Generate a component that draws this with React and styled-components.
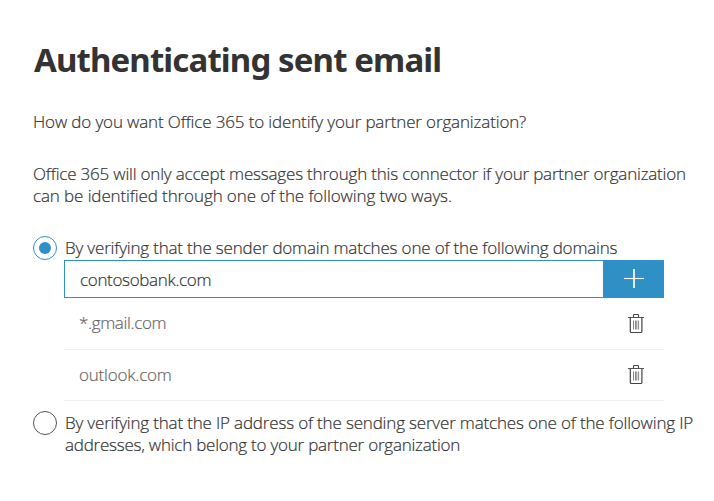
import React from "react";
import styled, { createGlobalStyle } from "styled-components";

const GlobalStyle = createGlobalStyle`
  * { box-sizing: border-box; }
  body { margin: 0; background: #fff; overflow: hidden; }
`;

const Page = styled.main`
  width: 714px;
  height: 501px;
  padding: 37px 0 0 33px;
  background: #fff;
  color: #333;
  font: 300 17px/22px "Open Sans", "Noto Sans", sans-serif;
  -webkit-text-stroke: 0.2px currentColor;
`;

const Title = styled.h1`
  margin: 0 0 28px 1px;
  color: #333;
  font: 700 33px/46px "Noto Sans", "Open Sans", sans-serif;
  letter-spacing: -0.88px;
  -webkit-text-stroke: 0;
  white-space: nowrap;
`;

const Paragraph = styled.p`
  margin: 0 0 ${(p) => p.$gap}px;
`;

const Line = styled.span`
  display: block;
  width: max-content;
  white-space: nowrap;
  letter-spacing: ${(p) => p.$spacing || 0}px;
`;

const Option = styled.label`
  display: flex;
  align-items: flex-start;
  gap: 8px;
`;

const Radio = styled.span`
  display: flex;
  flex: none;
  align-items: center;
  justify-content: center;
  width: 24px;
  height: 24px;
  border: 1px solid ${(p) => (p.$checked ? "#2f90c5" : "#555")};
  border-radius: 50%;

  &::after {
    content: "";
    width: 12px;
    height: 12px;
    border-radius: 50%;
    background: ${(p) => (p.$checked ? "#2f90c5" : "transparent")};
  }
`;

const OptionText = styled.span`
  display: block;
  padding-top: 1px;
`;

const Domains = styled.section`
  width: 600px;
  margin: 0 0 10px 31px;
`;

const Entry = styled.div`
  display: flex;
  height: 38px;
`;

const Field = styled.div`
  display: flex;
  align-items: center;
  width: 539px;
  padding: 2px 0 0 15px;
  border: 1px solid #2f90c5;
  border-right: 0;
`;

const AddButton = styled.button`
  display: flex;
  align-items: center;
  justify-content: center;
  width: 61px;
  padding: 0 0 0 1px;
  border: 0;
  background: #2f90c5;
`;

const DomainRow = styled.div`
  display: flex;
  align-items: center;
  justify-content: space-between;
  height: ${(p) => p.$height}px;
  padding: 0 20px 0 15px;
  border-bottom: 1px solid #f1f1f1;
  color: #666;
`;

const DomainName = styled(Line)`
  padding-bottom: ${(p) => p.$lift || 0}px;
`;

const PlusIcon = () => (
  <svg width="20" height="20" viewBox="0 0 20 20" fill="none" stroke="#fff">
    <path d="M0 9.5H20" strokeWidth="1.1" />
    <path d="M10 0V19" strokeWidth="1.7" />
  </svg>
);

const TrashIcon = () => (
  <svg width="16" height="20" viewBox="0 0 16 20" fill="none" stroke="#444">
    <path d="M0 3.5H16" stroke="#555" />
    <path d="M5.5 3V1.2Q5.5 .5 6.2 .5H9.8Q10.5 .5 10.5 1.2V3" strokeWidth="1.1" />
    <path d="M2.3 4V17.5Q2.3 18.5 3.3 18.5H12.9Q13.9 18.5 13.9 17.5V4" strokeWidth="1.2" />
    <path d="M5.5 6.5V15.5M7.5 6.5V15.5M8.8 6.5V15.5M10.6 6.5V15.5" stroke="#777" strokeWidth=".9" />
  </svg>
);

export default function App() {
  return (
    <>
      <GlobalStyle />
      <Page>
        <Title>Authenticating sent email</Title>
        <Paragraph $gap={30}>
          <Line $spacing={-0.14}>How do you want Office 365 to identify your partner organization?</Line>
        </Paragraph>
        <Paragraph $gap={29}>
          <Line $spacing={-0.19}>Office 365 will only accept messages through this connector if your partner organization</Line>
          <Line $spacing={-0.11}>can be identified through one of the following two ways.</Line>
        </Paragraph>
        <Option>
          <Radio $checked />
          <OptionText>
            <Line $spacing={-0.18}>By verifying that the sender domain matches one of the following domains</Line>
          </OptionText>
        </Option>
        <Domains>
          <Entry>
            <Field><Line $spacing={-0.33}>contosobank.com</Line></Field>
            <AddButton aria-label="Add domain"><PlusIcon /></AddButton>
          </Entry>
          <DomainRow $height={52}><DomainName $spacing={-0.35} $lift={1}>*.gmail.com</DomainName><TrashIcon /></DomainRow>
          <DomainRow $height={51}><DomainName $spacing={-0.2}>outlook.com</DomainName><TrashIcon /></DomainRow>
        </Domains>
        <Option>
          <Radio />
          <OptionText>
            <Line $spacing={-0.175}>By verifying that the IP address of the sending server matches one of the following IP</Line>
            <Line $spacing={-0.23}>addresses, which belong to your partner organization</Line>
          </OptionText>
        </Option>
      </Page>
    </>
  );
}
